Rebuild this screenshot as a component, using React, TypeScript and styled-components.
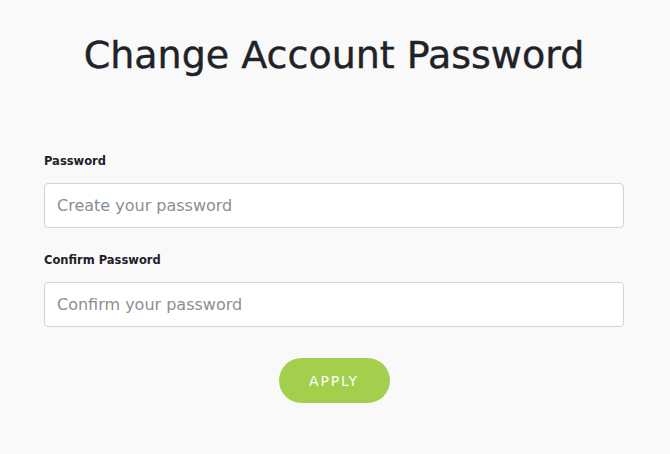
import React from "react";
import styled, { createGlobalStyle } from "styled-components";

const Global = createGlobalStyle`
  html, body { margin: 0; padding: 0; background: #f9f9f9; }
  * { box-sizing: border-box; }
`;

const Page = styled.div`
  min-height: 454px;
  background: #f9f9f9;
  font-family: "DejaVu Sans", "Open Sans", sans-serif;
  color: #212529;
  padding: 31px 46px 0 44px;
`;

const Title = styled.h1`
  margin: 0 0 74px;
  text-align: center;
  font-family: "DejaVu Sans", sans-serif;
  font-weight: 400;
  font-size: 38px;
  line-height: 48px;
  color: #1f2226;
  -webkit-text-stroke: 0.4px #1f2226;
`;

const Form = styled.form`
  display: flex;
  flex-direction: column;
`;

const Field = styled.div<{ $mb: number }>`
  display: flex;
  flex-direction: column;
  margin-bottom: ${(p) => p.$mb}px;
`;

const Label = styled.label`
  font-size: 11.5px;
  font-weight: 700;
  line-height: 16px;
  color: #1f2226;
  margin-bottom: 14px;
`;

const Input = styled.input`
  height: 45px;
  width: 100%;
  border: 1px solid #ced4da;
  border-radius: 4px;
  background: #fff;
  padding: 0 12px;
  font-family: "DejaVu Sans", sans-serif;
  font-size: 16px;
  color: #495057;
  outline: none;
  &::placeholder { color: #8a8f96; }
`;

const Actions = styled.div`
  display: flex;
  justify-content: center;
`;

const Button = styled.button`
  width: 111px;
  height: 45px;
  border: none;
  border-radius: 23px;
  background: #a3cf4d;
  color: #fff;
  font-family: "DejaVu Sans", sans-serif;
  font-size: 14px;
  font-weight: 400;
  letter-spacing: 1.8px;
  cursor: pointer;
`;

export default function App() {
  return (
    <>
      <Global />
      <Page>
        <Title>Change Account Password</Title>
        <Form onSubmit={(e) => e.preventDefault()}>
          <Field $mb={24}>
            <Label>Password</Label>
            <Input type="password" placeholder="Create your password" />
          </Field>
          <Field $mb={31}>
            <Label>Confirm Password</Label>
            <Input type="password" placeholder="Confirm your password" />
          </Field>
          <Actions>
            <Button type="submit">APPLY</Button>
          </Actions>
        </Form>
      </Page>
    </>
  );
}
